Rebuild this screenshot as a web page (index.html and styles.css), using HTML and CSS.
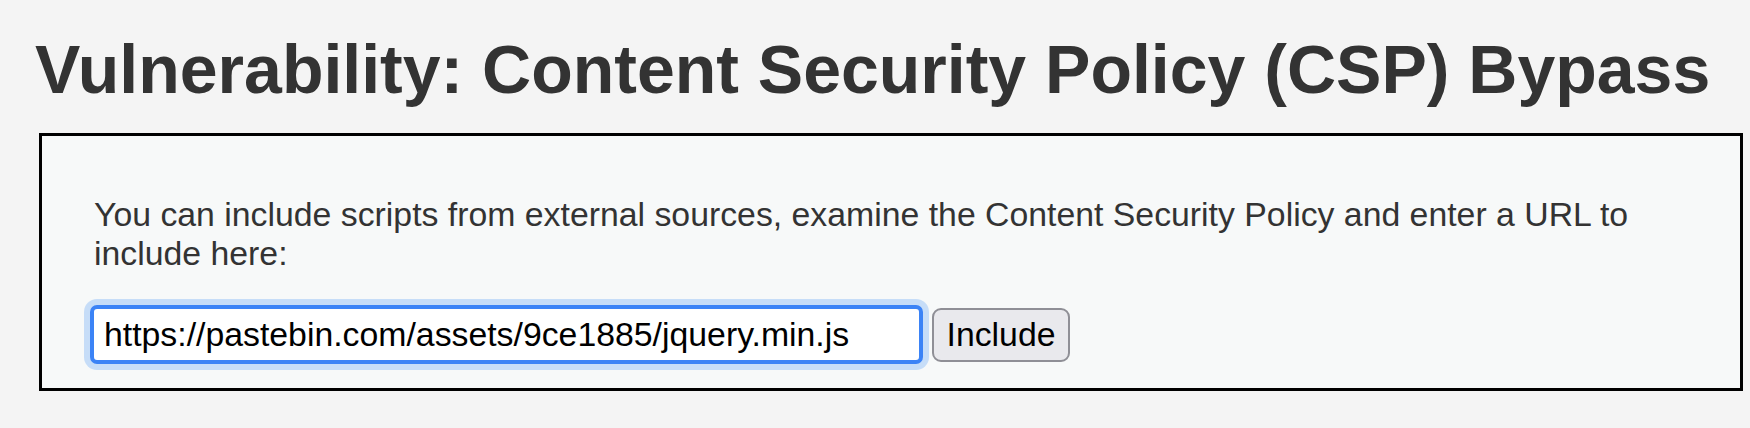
FILE: index.html
```html
<!DOCTYPE html>
<html lang="en">
<head>
<meta charset="utf-8">
<title>Vulnerability: Content Security Policy (CSP) Bypass</title>
<link rel="stylesheet" href="styles.css">
</head>
<body>
<div class="page">
  <h1 class="title">Vulnerability: Content Security Policy (CSP) Bypass</h1>
  <div class="code-area">
    <form class="include-form">
      <p class="intro">You can include scripts from external sources, examine the Content Security Policy and enter a URL to include here:</p>
      <div class="field-row">
        <input class="url-input" type="text" name="include" value="https://pastebin.com/assets/9ce1885/jquery.min.js">
        <button class="include-btn" type="button">Include</button>
      </div>
    </form>
  </div>
</div>
</body>
</html>
```

FILE: styles.css
```css
html, body {
  margin: 0;
  padding: 0;
  background: #f4f4f4;
}

body {
  font-family: "Liberation Sans", Arial, sans-serif;
  color: #333333;
}

.page {
  padding: 29.5px 7px 0 35px;
}

.title {
  margin: 0;
  font-size: 68px;
  font-weight: bold;
  line-height: normal;
  color: #333333;
  white-space: nowrap;
}

.code-area {
  margin: 25.5px 0 0 4px;
  border: 3px solid #000000;
  background: #f7f9f9;
  padding: 59px 40px 24px 52px;
}

.include-form {
  margin: 0;
}

.intro {
  margin: 0;
  font-size: 33.8px;
  line-height: normal;
  color: #333333;
}

.field-row {
  display: flex;
  align-items: center;
  gap: 9px;
  margin-top: 32px;
  margin-left: -4px;
}

.url-input {
  box-sizing: border-box;
  width: 833px;
  height: 59px;
  border: 4px solid #3b83f6;
  border-radius: 7px;
  box-shadow: 0 0 0 6px #c6ddf8;
  background: #ffffff;
  padding: 0 10px;
  font-family: "Liberation Sans", Arial, sans-serif;
  font-size: 33.8px;
  color: #000000;
  outline: none;
}

.include-btn {
  box-sizing: border-box;
  width: 138px;
  height: 54px;
  border: 2px solid #8f8f96;
  border-radius: 9px;
  background: #e9e9ed;
  padding: 0;
  font-family: "Liberation Sans", Arial, sans-serif;
  font-size: 33.8px;
  color: #000000;
}
```
